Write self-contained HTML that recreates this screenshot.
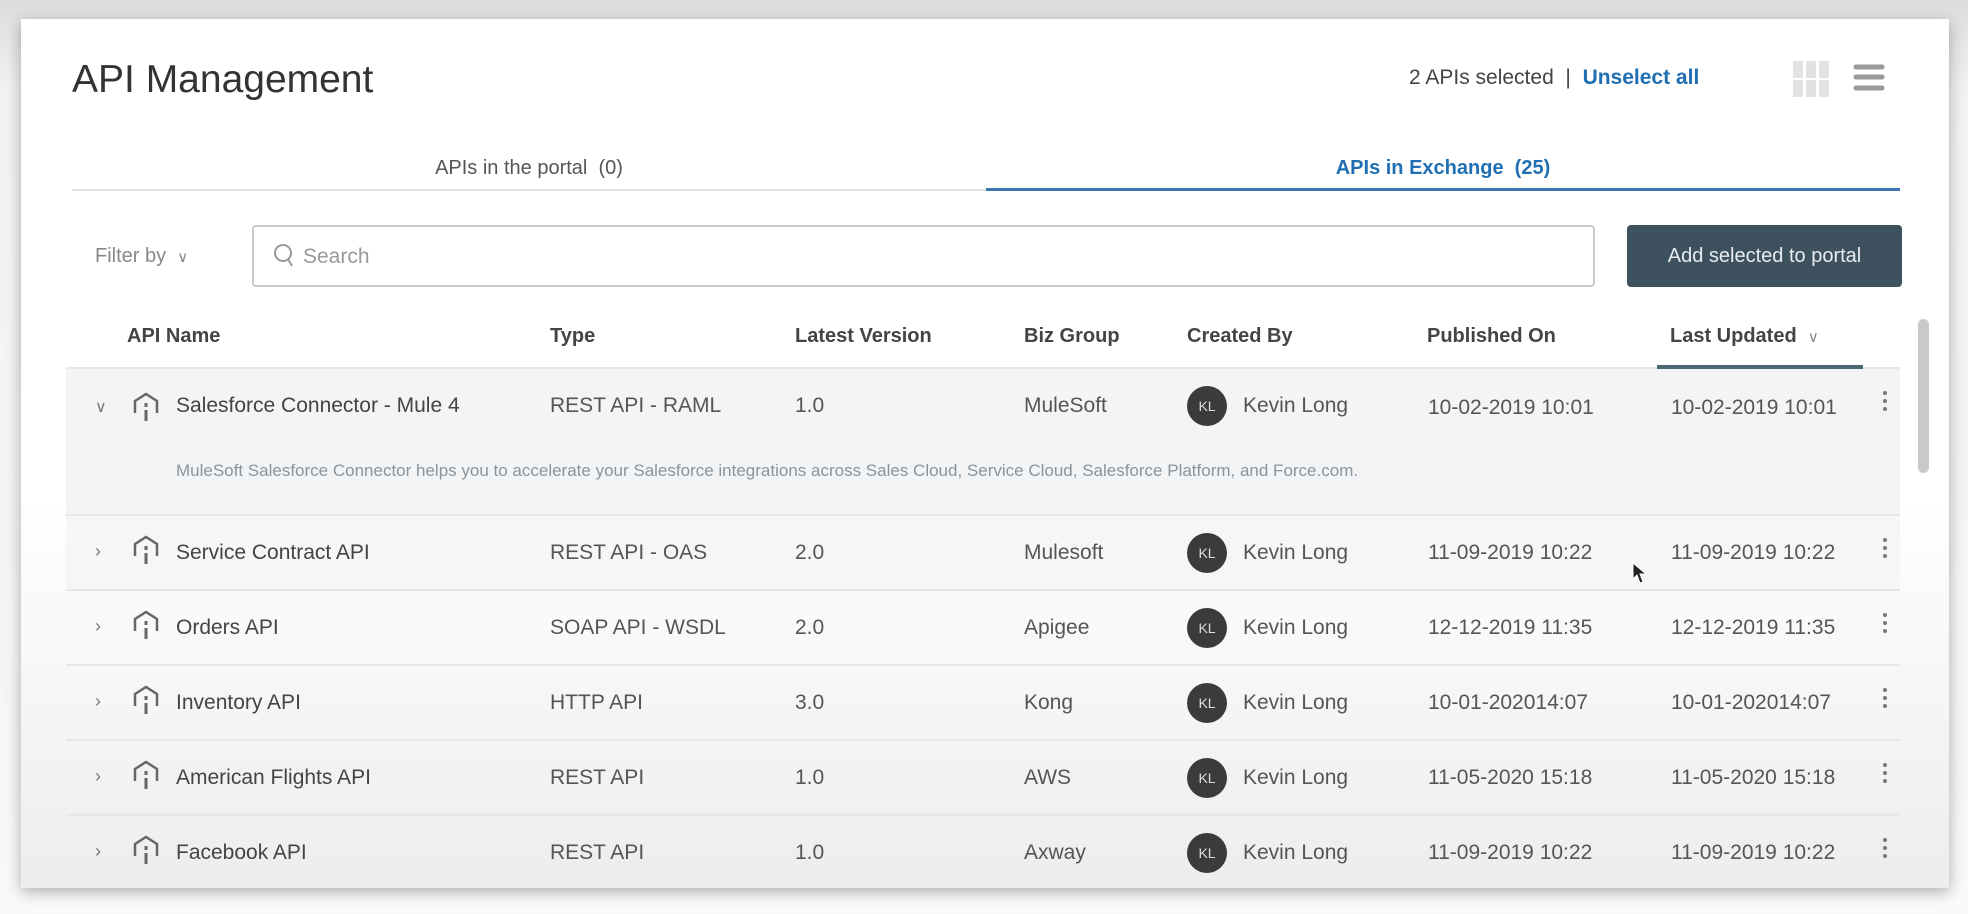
<!DOCTYPE html>
<html><head><meta charset="utf-8"><style>
*{margin:0;padding:0;box-sizing:border-box}
body{width:1968px;height:914px;overflow:hidden;background:linear-gradient(#dcdcdc,#f2f2f2 10%,#f6f6f6 85%,#fafafa);font-family:"Liberation Sans",sans-serif;color:#555;position:relative}
.card{position:absolute;left:21px;top:19px;width:1928px;height:869px;background:linear-gradient(#fff 0%,#fff 55%,#ededed 100%);box-shadow:0 4px 14px rgba(0,0,0,.3);overflow:hidden}
.a{position:absolute;white-space:nowrap}
.h{font-weight:bold;font-size:20px;color:#444;top:306px}
.row{position:absolute;left:45px;width:1834px;height:75px;border-bottom:2px solid #e6e7e9}
.c{position:absolute;font-size:21px;color:#555;white-space:nowrap;top:25px}
.av{position:absolute;left:1121px;top:17px;width:40px;height:40px;border-radius:50%;background:#3b3b3b;color:#ddd;font-size:14px;text-align:center;line-height:40px}
.keb{position:absolute;left:1817px;top:22px;width:4px}
.keb i{display:block;width:4px;height:4px;border-radius:2px;background:#777;margin-bottom:4px}
</style></head><body>
<div class="card">
<div class="a" style="left:51px;top:39px;font-size:39px;color:#333">API Management</div>
<div class="a" style="left:1388px;top:47px;font-size:21px;color:#444">2 APIs selected &nbsp;|&nbsp; <span style="color:#1f6fb2;font-weight:bold">Unselect all</span></div>
<svg class="a" style="left:1772px;top:42px" width="38" height="36"><g fill="#e2e2e2"><rect x="0" y="0" width="10" height="17"/><rect x="13" y="0" width="10" height="17"/><rect x="26" y="0" width="10" height="17"/><rect x="0" y="19" width="10" height="17"/><rect x="13" y="19" width="10" height="17"/><rect x="26" y="19" width="10" height="17"/></g></svg>
<svg class="a" style="left:1832px;top:45px" width="32" height="28"><g stroke="#999" stroke-width="5" stroke-linecap="round"><line x1="3" y1="3" x2="29" y2="3"/><line x1="3" y1="13" x2="29" y2="13"/><line x1="3" y1="24" x2="29" y2="24"/></g></svg>
<div class="a" style="left:51px;top:170px;width:914px;height:2px;background:#e2e2e2"></div>
<div class="a" style="left:965px;top:169px;width:914px;height:3px;background:#3c78ad"></div>
<div class="a" style="left:51px;top:138px;width:914px;text-align:center;font-size:20px;color:#555">APIs in the portal &nbsp;(0)</div>
<div class="a" style="left:965px;top:138px;width:914px;text-align:center;font-size:20px;color:#1f6fb2;font-weight:bold">APIs in Exchange &nbsp;(25)</div>
<div class="a" style="left:74px;top:226px;font-size:20px;color:#888">Filter by &nbsp;<span style="font-size:15px">∨</span></div>
<div class="a" style="left:231px;top:206px;width:1343px;height:62px;border:2px solid #ccc;border-radius:4px"></div>
<svg class="a" style="left:252px;top:224px" width="22" height="26"><circle cx="10" cy="10" r="8" fill="none" stroke="#999" stroke-width="2"/><line x1="15" y1="16" x2="19" y2="23" stroke="#999" stroke-width="2"/></svg>
<div class="a" style="left:282px;top:226px;font-size:21px;color:#999">Search</div>
<div class="a" style="left:1606px;top:206px;width:275px;height:62px;background:#3d525e;border-radius:4px;color:#e8ecee;font-size:20px;text-align:center;line-height:62px">Add selected to portal</div>
<div class="a h" style="left:106px">API Name</div>
<div class="a h" style="left:529px">Type</div>
<div class="a h" style="left:774px">Latest Version</div>
<div class="a h" style="left:1003px">Biz Group</div>
<div class="a h" style="left:1166px">Created By</div>
<div class="a h" style="left:1406px">Published On</div>
<div class="a h" style="left:1649px">Last Updated &nbsp;<span style="font-weight:normal;color:#888;font-size:15px">∨</span></div>
<div class="a" style="left:45px;top:348px;width:1834px;height:2px;background:#e6e7e9"></div>
<div class="a" style="left:1636px;top:346px;width:206px;height:4px;background:#4d6673"></div>
<div class="a" style="left:1897px;top:300px;width:11px;height:154px;border-radius:6px;background:#c9c9c9"></div>

<div class="row" style="top:350px;height:147px;background:#f3f4f6">
<div class="c" style="left:29px;font-size:16px;top:28px;color:#777">∨</div>
<svg class="a" style="left:66px;top:22px" width="30" height="34"><path d="M3 22 V10 L14 3 L25 10 V22" fill="none" stroke="#666" stroke-width="2.5"/><rect x="12.5" y="12" width="3" height="4" fill="#666"/><rect x="12.5" y="19" width="3" height="11" fill="#666"/></svg>
<div class="c" style="left:110px;color:#444">Salesforce Connector - Mule 4</div>
<div class="c" style="left:484px">REST API - RAML</div>
<div class="c" style="left:729px">1.0</div>
<div class="c" style="left:958px">MuleSoft</div>
<div class="av">KL</div>
<div class="c" style="left:1177px">Kevin Long</div>
<div class="c" style="left:1362px;top:27px">10-02-2019 10:01</div>
<div class="c" style="left:1605px;top:27px">10-02-2019 10:01</div>
<div class="keb"><i></i><i></i><i></i></div>
<div class="c" style="left:110px;top:92px;font-size:17px;color:#8a949c">MuleSoft Salesforce Connector helps you to accelerate your Salesforce integrations across Sales Cloud, Service Cloud, Salesforce Platform, and Force.com.</div>
</div>

<div class="row" style="top:497px;background:#f5f6f7">
<div class="c" style="left:29px;font-size:18px;color:#777">›</div>
<svg class="a" style="left:66px;top:18px" width="30" height="34"><path d="M3 22 V10 L14 3 L25 10 V22" fill="none" stroke="#666" stroke-width="2.5"/><rect x="12.5" y="12" width="3" height="4" fill="#666"/><rect x="12.5" y="19" width="3" height="11" fill="#666"/></svg>
<div class="c" style="left:110px;color:#444">Service Contract API</div><div class="c" style="left:484px">REST API - OAS</div><div class="c" style="left:729px">2.0</div><div class="c" style="left:958px">Mulesoft</div><div class="av">KL</div><div class="c" style="left:1177px">Kevin Long</div><div class="c" style="left:1362px">11-09-2019 10:22</div><div class="c" style="left:1605px">11-09-2019 10:22</div><div class="keb"><i></i><i></i><i></i></div>
<svg class="a" style="left:1566px;top:46px" width="16" height="24"><path d="M1 1 L1 17 L5 13 L8 21 L11 20 L8 12 L14 12 Z" fill="#222" stroke="#fff" stroke-width="1"/></svg>
</div>

<div class="row" style="top:572px">
<div class="c" style="left:29px;font-size:18px;color:#777">›</div>
<svg class="a" style="left:66px;top:18px" width="30" height="34"><path d="M3 22 V10 L14 3 L25 10 V22" fill="none" stroke="#666" stroke-width="2.5"/><rect x="12.5" y="12" width="3" height="4" fill="#666"/><rect x="12.5" y="19" width="3" height="11" fill="#666"/></svg>
<div class="c" style="left:110px;color:#444">Orders API</div><div class="c" style="left:484px">SOAP API - WSDL</div><div class="c" style="left:729px">2.0</div><div class="c" style="left:958px">Apigee</div><div class="av">KL</div><div class="c" style="left:1177px">Kevin Long</div><div class="c" style="left:1362px">12-12-2019 11:35</div><div class="c" style="left:1605px">12-12-2019 11:35</div><div class="keb"><i></i><i></i><i></i></div>
</div>

<div class="row" style="top:647px">
<div class="c" style="left:29px;font-size:18px;color:#777">›</div>
<svg class="a" style="left:66px;top:18px" width="30" height="34"><path d="M3 22 V10 L14 3 L25 10 V22" fill="none" stroke="#666" stroke-width="2.5"/><rect x="12.5" y="12" width="3" height="4" fill="#666"/><rect x="12.5" y="19" width="3" height="11" fill="#666"/></svg>
<div class="c" style="left:110px;color:#444">Inventory API</div><div class="c" style="left:484px">HTTP API</div><div class="c" style="left:729px">3.0</div><div class="c" style="left:958px">Kong</div><div class="av">KL</div><div class="c" style="left:1177px">Kevin Long</div><div class="c" style="left:1362px">10-01-202014:07</div><div class="c" style="left:1605px">10-01-202014:07</div><div class="keb"><i></i><i></i><i></i></div>
</div>

<div class="row" style="top:722px">
<div class="c" style="left:29px;font-size:18px;color:#777">›</div>
<svg class="a" style="left:66px;top:18px" width="30" height="34"><path d="M3 22 V10 L14 3 L25 10 V22" fill="none" stroke="#666" stroke-width="2.5"/><rect x="12.5" y="12" width="3" height="4" fill="#666"/><rect x="12.5" y="19" width="3" height="11" fill="#666"/></svg>
<div class="c" style="left:110px;color:#444">American Flights API</div><div class="c" style="left:484px">REST API</div><div class="c" style="left:729px">1.0</div><div class="c" style="left:958px">AWS</div><div class="av">KL</div><div class="c" style="left:1177px">Kevin Long</div><div class="c" style="left:1362px">11-05-2020 15:18</div><div class="c" style="left:1605px">11-05-2020 15:18</div><div class="keb"><i></i><i></i><i></i></div>
</div>

<div class="row" style="top:797px;border-bottom:none">
<div class="c" style="left:29px;font-size:18px;color:#777">›</div>
<svg class="a" style="left:66px;top:18px" width="30" height="34"><path d="M3 22 V10 L14 3 L25 10 V22" fill="none" stroke="#666" stroke-width="2.5"/><rect x="12.5" y="12" width="3" height="4" fill="#666"/><rect x="12.5" y="19" width="3" height="11" fill="#666"/></svg>
<div class="c" style="left:110px;color:#444">Facebook API</div><div class="c" style="left:484px">REST API</div><div class="c" style="left:729px">1.0</div><div class="c" style="left:958px">Axway</div><div class="av">KL</div><div class="c" style="left:1177px">Kevin Long</div><div class="c" style="left:1362px">11-09-2019 10:22</div><div class="c" style="left:1605px">11-09-2019 10:22</div><div class="keb"><i></i><i></i><i></i></div>
</div>
</div>
</body></html>
